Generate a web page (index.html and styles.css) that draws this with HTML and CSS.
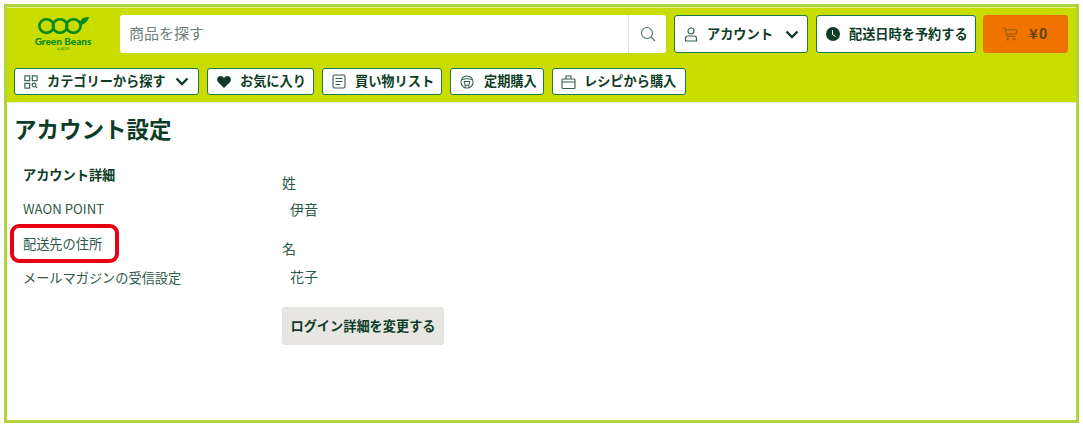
FILE: index.html
```html
<!DOCTYPE html>
<html lang="ja">
<head>
<meta charset="utf-8">
<title>アカウント設定</title>
<link rel="stylesheet" href="styles.css">
</head>
<body>
<div class="frame">
  <header class="header">
    <div class="row-top">
      <a class="logo">
        <svg class="logo-mark" width="52" height="18" viewBox="0 0 52 18">
          <g fill="none" stroke="#0a8a1e" stroke-width="2.6">
            <ellipse cx="8.500" cy="10" rx="7.200" ry="6.800"/>
            <ellipse cx="22" cy="10" rx="7.200" ry="6.800"/>
            <ellipse cx="35.500" cy="10" rx="7.200" ry="6.800"/>
          </g>
          <path d="M42 7C42 3 46 1 51 1C50 5 47 8 43 9Z" fill="#0a8a1e"/>
        </svg>
        <span class="logo-name">Green Beans</span>
        <span class="logo-by">by AEON</span>
      </a>
      <div class="search">
        <span class="search-text">商品を探す</span>
        <span class="search-btn">
          <svg width="16" height="16" viewBox="0 0 16 16" fill="none" stroke="#4d7565" stroke-width="1.1"><circle cx="7" cy="7" r="5.5"/><path d="M11 11l4 4"/></svg>
        </span>
      </div>
      <button class="btn btn-tall btn-account">
        <svg width="14" height="15" viewBox="0 0 14 15" fill="none" stroke="#2f5f4a" stroke-width="1.2"><circle cx="7" cy="4" r="3"/><path d="M1.5 14v-2.5c0-1.5 1-2.500 2.500-2.500h6c1.500 0 2.500 1 2.500 2.500V14z"/></svg>
        <span class="label">アカウント</span>
        <svg class="chev" width="14" height="9" viewBox="0 0 14 9" fill="none" stroke="#0d3d26" stroke-width="2.4"><path d="M1.500 1.500L7 7l5.500-5.500"/></svg>
      </button>
      <button class="btn btn-tall btn-delivery">
        <svg width="14" height="14" viewBox="0 0 14 14"><circle cx="7" cy="7" r="7" fill="#0d3d26"/><path d="M6.500 3v4.500l3 2" fill="none" stroke="#fff" stroke-width="1"/></svg>
        <span class="label">配送日時を予約する</span>
      </button>
      <button class="cart">
        <svg width="16" height="14" viewBox="0 0 17 15" fill="none" stroke="#8a5a10" stroke-width="1"><path d="M0.500 1h3l1.500 9h9M4 3h12l-1 4.500H5"/><circle cx="6" cy="13" r="1"/><circle cx="13" cy="13" r="1"/></svg>
        <span class="label">¥0</span>
      </button>
    </div>
    <nav class="row-nav">
      <button class="btn btn-small nav-category">
        <svg width="14" height="14" viewBox="0 0 16 16" fill="none" stroke="#2f5f4a" stroke-width="1.3"><rect x="1" y="1" width="5.500" height="5.500"/><rect x="9.500" y="1" width="5.500" height="5.500"/><rect x="1" y="9.500" width="5.500" height="5.500"/><circle cx="11.500" cy="11.500" r="2.200"/><path d="M13 13l2 2"/></svg>
        <span class="label">カテゴリーから探す</span>
        <svg width="14" height="9" viewBox="0 0 14 9" fill="none" stroke="#0d3d26" stroke-width="2.400"><path d="M1.500 1.500L7 7l5.500-5.500"/></svg>
      </button>
      <button class="btn btn-small nav-favorite">
        <svg width="14" height="12" viewBox="0 0 15 13"><path d="M7.500 13L1.200 6.800C-.4 5.200-.4 2.700 1.100 1.200 2.600-.3 5-.3 6.500 1.200l1 1 1-1c1.500-1.500 3.900-1.500 5.400 0 1.500 1.500 1.500 4 0 5.600z" fill="#0d3d26"/></svg>
        <span class="label">お気に入り</span>
      </button>
      <button class="btn btn-small nav-list">
        <svg width="14" height="15" viewBox="0 0 14 15" fill="none" stroke="#2f5f4a" stroke-width="1.100"><rect x="1" y="1" width="12" height="13" rx="1.500"/><path d="M3.500 4.500h7M3.500 7.500h7M3.500 10.500h4.500"/></svg>
        <span class="label">買い物リスト</span>
      </button>
      <button class="btn btn-small nav-regular">
        <svg width="14" height="14" viewBox="0 0 15 15" fill="none" stroke="#2f5f4a" stroke-width="1.100"><circle cx="7.500" cy="7.500" r="6.500"/><path d="M1.500 5.500c4-2 8-2 12 0M4.500 7h6l-1 4h-4zM5.500 11v2.500M9.500 11v2.500"/></svg>
        <span class="label">定期購入</span>
      </button>
      <button class="btn btn-small nav-recipe">
        <svg width="15" height="14" viewBox="0 0 15 14" fill="none" stroke="#2f5f4a" stroke-width="1.100"><rect x="1" y="4" width="13" height="9.500" rx="1"/><path d="M5 4V1h5V4M1 7h13"/></svg>
        <span class="label">レシピから購入</span>
      </button>
    </nav>
  </header>
  <main class="main">
    <h1 class="title">アカウント設定</h1>
    <div class="columns">
      <ul class="side">
        <li class="side-item side-active">アカウント詳細</li>
        <li class="side-item">WAON POINT</li>
        <li class="side-item side-marked">配送先の住所<span class="marker"></span></li>
        <li class="side-item">メールマガジンの受信設定</li>
      </ul>
      <section class="details">
        <div class="field-label">姓</div>
        <div class="field-value">伊音</div>
        <div class="field-label">名</div>
        <div class="field-value">花子</div>
        <button class="change"><span class="label">ログイン詳細を変更する</span></button>
      </section>
    </div>
  </main>
</div>
</body>
</html>
```
FILE: styles.css
```css
* { box-sizing: border-box; }
html, body { margin: 0; padding: 0; background: #fff; }
body {
  width: 1083px;
  height: 428px;
  padding: 4px 4px 5px 4px;
  overflow: hidden;
  font-family: "Noto Sans CJK JP", "Noto Sans", sans-serif;
  color: #0d3d26;
}
.frame {
  width: 1075px;
  height: 419px;
  border: 3px solid #aed63a;
  display: flex;
  flex-direction: column;
}
.header {
  background: #c8dc00;
  height: 96px;
  border-top: 1px solid #e4ee90;
  border-bottom: 1px solid #e8eecc;
  padding: 7px 7px 0 7px;
}
.row-top { display: flex; align-items: stretch; height: 38px; }
.label { position: relative; top: -1px; white-space: nowrap; }
.logo {
  width: 106px;
  display: flex;
  flex-direction: column;
  align-items: center;
  flex: none;
  margin-top: 1px;
  padding-right: 8px;
}
.logo-mark { display: block; margin-left: 2px; }
.logo-name {
  font-family: "Lato", sans-serif;
  font-size: 10px;
  font-weight: 900;
  color: #0a8a1e;
  line-height: 11px;
  margin-top: 2px;
}
.logo-by { font-family: "Open Sans", sans-serif; font-size: 3px; line-height: 4px; color: #0a8a1e; }
.search {
  width: 546px;
  background: #fff;
  border-radius: 3px;
  display: flex;
  align-items: center;
  justify-content: space-between;
}
.search-text { font-size: 15px; color: #6d7f77; padding-left: 9px; position: relative; top: -2px; }
.search-btn {
  width: 38px;
  height: 100%;
  border-left: 1px solid #e0e0dc;
  display: flex;
  align-items: center;
  justify-content: center;
}
.btn {
  background: #fff;
  border: 1px solid #1b7a45;
  border-radius: 3px;
  font-family: inherit;
  font-weight: 700;
  color: #0d3d26;
  display: flex;
  align-items: center;
  padding: 0;
  flex: none;
}
.btn-tall { height: 38px; font-size: 13.200px; }
.btn-account { width: 134px; margin-left: 8px; padding-left: 9px; gap: 9px; }
.btn-account .chev { margin-left: 3px; }
.btn-delivery { width: 160px; margin-left: 8px; padding-left: 9px; gap: 9px; }
.cart {
  width: 85px;
  height: 38px;
  margin-left: 7px;
  background: #f07400;
  border: 1px solid #e8700a;
  border-radius: 3px;
  display: flex;
  align-items: center;
  justify-content: center;
  gap: 11px;
  font-family: inherit;
  font-size: 14px;
  font-weight: 700;
  letter-spacing: 1.500px;
  color: #5c4410;
  flex: none;
}
.row-nav { display: flex; gap: 8px; margin-top: 15px; }
.btn-small { height: 27px; font-size: 13.200px; padding: 0 0 0 9px; gap: 9px; }
.nav-category { width: 185px; }
.nav-favorite { width: 107px; }
.nav-list { width: 120px; }
.nav-regular { width: 94px; gap: 10px; }
.nav-recipe { width: 134px; padding-left: 8px; gap: 8px; }
.main { flex: 1; padding: 0 0 0 7px; background: #fff; }
.title { font-size: 22.500px; font-weight: 700; margin: 10px 0 0; line-height: 30px; }
.columns { display: flex; margin-top: 15px; }
.side { list-style: none; margin: 0; padding: 0; width: 268px; flex: none; }
.side-item { font-size: 13.200px; line-height: 34px; height: 34.300px; padding-left: 9px; color: #2f5a48; position: relative; }
.side-active { font-weight: 700; color: #0d3d26; }
.marker {
  position: absolute;
  left: -4px;
  top: -3px;
  width: 109px;
  height: 39px;
  border: 4px solid #e60012;
  border-radius: 9px;
}
.details { padding-top: 13px; }
.field-label { font-size: 14px; line-height: 22px; color: #2f5a48; }
.field-value { font-size: 14px; line-height: 22px; margin-top: 5px; margin-bottom: 17px; padding-left: 8px; color: #2f5a48; }
.details .field-value:nth-of-type(4) { margin-bottom: 0; margin-top: 6px; }
.change {
  display: block;
  width: 162px;
  height: 38px;
  margin-top: 20px;
  background: #e8e6e3;
  border: 1px solid #e4e2df;
  border-radius: 3px;
  font-family: inherit;
  font-size: 13.200px;
  font-weight: 700;
  color: #0d3d26;
  padding: 0;
}
```
